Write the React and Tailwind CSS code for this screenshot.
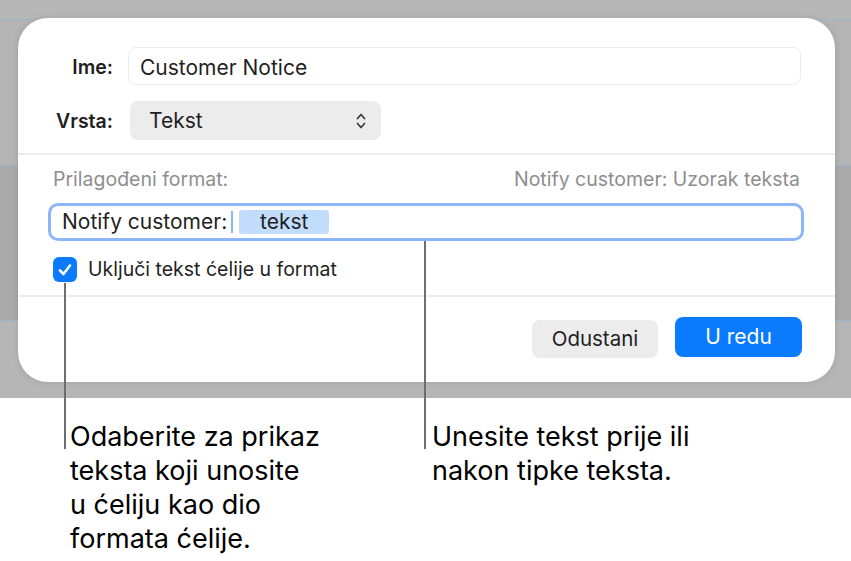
import React from 'react';

const font = { fontFamily: 'Inter, "Noto Sans", sans-serif' };

// Small up/down chevron used by the popup button
function UpDownIcon() {
  return (
    <svg className="w-[12px] h-[18px]" viewBox="0 0 12 18" fill="none" stroke="#3a3a3a" strokeWidth="1.7" strokeLinecap="round" strokeLinejoin="round">
      <path d="M2.5 6.5 6 2.5l3.5 4" />
      <path d="M2.5 11.5 6 15.5l3.5-4" />
    </svg>
  );
}

function Checkbox() {
  return (
    <div className="w-[24px] h-[25px] rounded-[6px] bg-[#0a7aff] flex items-center justify-center">
      <svg className="w-[16px] h-[16px]" viewBox="0 0 16 16" fill="none" stroke="white" strokeWidth="2.6" strokeLinecap="round" strokeLinejoin="round">
        <path d="M3 8.5 6.5 12 13 3.5" />
      </svg>
    </div>
  );
}

function Dialog() {
  return (
    <div className="absolute left-[18px] top-[18px] w-[817px] h-[364px] bg-white rounded-[30px] shadow-[0_0_6px_rgba(0,0,0,0.12)] flex flex-col text-[#1f1f1f]">
      {/* name + type rows */}
      <div className="pt-[29px] pr-[34px] flex flex-col gap-[16px]">
        <div className="flex items-center">
          <div className="w-[95px] text-right text-[19.5px] font-semibold pt-[3px]">Ime:</div>
          <div className="ml-[15px] flex-1 h-[38px] rounded-[8px] border border-[#ececec] flex items-center px-[11px] pt-[3px] text-[21px]">
            Customer Notice
          </div>
        </div>
        <div className="flex items-center">
          <div className="w-[95px] text-right text-[19.5px] font-semibold pt-[3px]">Vrsta:</div>
          <div className="ml-[17px] w-[251px] h-[39px] rounded-[8px] bg-[#ececec] flex items-center justify-between pl-[19px] pr-[14px] text-[21px]">
            <span className="pt-[1px]">Tekst</span>
            <UpDownIcon />
          </div>
        </div>
      </div>

      <div className="mt-[13px] h-[2px] bg-[#ececec]" />

      {/* custom format */}
      <div className="px-[35px] mt-[12px] flex items-center justify-between text-[19.5px] leading-[24px] text-[#8e8e8e]">
        <span>Prilagođeni format:</span>
        <span>Notify customer: Uzorak teksta</span>
      </div>
      <div className="ml-[30px] mr-[31px] mt-[12px] h-[38px] rounded-[10px] border-[3px] border-[#8cb6f9] flex items-center pl-[11px] text-[21px] leading-[26px]">
        <span>Notify customer:</span>
        <span className="ml-[4px] w-[2px] h-[22px] bg-[#8cb6f9]" />
        <span className="ml-[6px] w-[90px] h-[24px] rounded-[3px] bg-[#c2dcfb] flex items-center justify-center">tekst</span>
      </div>
      <div className="ml-[35px] mt-[16px] flex items-center gap-[11px] text-[19.5px] leading-[25px]">
        <Checkbox />
        <span>Uključi tekst ćelije u format</span>
      </div>

      <div className="mt-[13px] h-[2px] bg-[#ececec]" />

      {/* buttons */}
      <div className="flex items-start justify-end gap-[17px] pr-[33px] mt-[20px]">
        <div className="w-[126px] h-[38px] mt-[3px] rounded-[8px] bg-[#ececec] flex items-center justify-center text-[20.5px]">Odustani</div>
        <div className="w-[127px] h-[40px] rounded-[8px] bg-[#0a7aff] text-white flex items-center justify-center text-[21px]">U redu</div>
      </div>
    </div>
  );
}

export default function App() {
  return (
    <div className="relative w-[851px] h-[561px] bg-white overflow-hidden" style={font}>
      {/* backdrop of the window behind the sheet */}
      <div className="h-[398px] flex flex-col bg-[#b5b5b5]">
        <div className="h-[19px] bg-[#b7b7b7]" />
        <div className="h-px bg-[#9db4cf]" />
        <div className="h-[145px] bg-[#b4b4b4]" />
        <div className="h-px bg-[#9db4cf]" />
        <div className="h-[154px] bg-[#aaaaaa]" />
        <div className="h-px bg-[#9db4cf]" />
        <div className="flex-1 bg-[#b6b6b6]" />
      </div>

      <Dialog />

      {/* callout leader lines */}
      <div className="absolute left-[64px] top-[283px] w-[2px] h-[166px] bg-[#6e6e6e]" />
      <div className="absolute left-[424px] top-[241px] w-[2px] h-[208px] bg-[#6e6e6e]" />

      {/* callout text */}
      <div className="flex pt-[22px] text-[27px] leading-[34px] text-black">
        <div className="ml-[70px] w-[300px]">
          Odaberite za prikaz<br />
          teksta koji unosite<br />
          u ćeliju kao dio<br />
          formata ćelije.
        </div>
        <div className="ml-[62px]">
          Unesite tekst prije ili<br />
          nakon tipke teksta.
        </div>
      </div>
    </div>
  );
}
